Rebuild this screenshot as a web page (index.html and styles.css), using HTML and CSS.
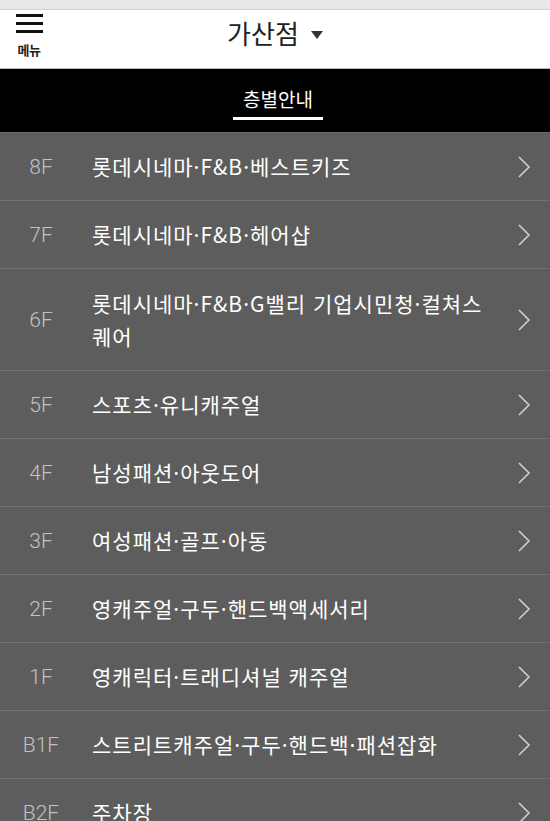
FILE: index.html
```html
<!DOCTYPE html>
<html lang="ko">
<head>
<meta charset="utf-8">
<link rel="stylesheet" href="styles.css">
</head>
<body>
<div class="topstrip"></div>
<header class="header">
  <div class="menu">
    <span class="bar"></span><span class="bar"></span><span class="bar"></span>
    <span class="menu-label">메뉴</span>
  </div>
  <div class="title">가산점 <span class="caret"></span></div>
</header>
<nav class="tabs">
  <span class="tab">층별안내</span>
</nav>
<ul class="floors">
  <li class="row"><span class="fl">8F</span><span class="txt">롯데시네마·F&amp;B·베스트키즈</span><span class="chev"><svg width="14" height="24" viewBox="0 0 14 24"><path d="M2 2 L12 12 L2 22" fill="none" stroke="#cfcfcf" stroke-width="1.6"/></svg></span></li>
  <li class="row"><span class="fl">7F</span><span class="txt">롯데시네마·F&amp;B·헤어샵</span><span class="chev"><svg width="14" height="24" viewBox="0 0 14 24"><path d="M2 2 L12 12 L2 22" fill="none" stroke="#cfcfcf" stroke-width="1.6"/></svg></span></li>
  <li class="row tall"><span class="fl">6F</span><span class="txt">롯데시네마·F&amp;B·G밸리 기업시민청·컬쳐스퀘어</span><span class="chev"><svg width="14" height="24" viewBox="0 0 14 24"><path d="M2 2 L12 12 L2 22" fill="none" stroke="#cfcfcf" stroke-width="1.6"/></svg></span></li>
  <li class="row"><span class="fl">5F</span><span class="txt">스포츠·유니캐주얼</span><span class="chev"><svg width="14" height="24" viewBox="0 0 14 24"><path d="M2 2 L12 12 L2 22" fill="none" stroke="#cfcfcf" stroke-width="1.6"/></svg></span></li>
  <li class="row"><span class="fl">4F</span><span class="txt">남성패션·아웃도어</span><span class="chev"><svg width="14" height="24" viewBox="0 0 14 24"><path d="M2 2 L12 12 L2 22" fill="none" stroke="#cfcfcf" stroke-width="1.6"/></svg></span></li>
  <li class="row"><span class="fl">3F</span><span class="txt">여성패션·골프·아동</span><span class="chev"><svg width="14" height="24" viewBox="0 0 14 24"><path d="M2 2 L12 12 L2 22" fill="none" stroke="#cfcfcf" stroke-width="1.6"/></svg></span></li>
  <li class="row"><span class="fl">2F</span><span class="txt">영캐주얼·구두·핸드백액세서리</span><span class="chev"><svg width="14" height="24" viewBox="0 0 14 24"><path d="M2 2 L12 12 L2 22" fill="none" stroke="#cfcfcf" stroke-width="1.6"/></svg></span></li>
  <li class="row"><span class="fl">1F</span><span class="txt">영캐릭터·트래디셔널 캐주얼</span><span class="chev"><svg width="14" height="24" viewBox="0 0 14 24"><path d="M2 2 L12 12 L2 22" fill="none" stroke="#cfcfcf" stroke-width="1.6"/></svg></span></li>
  <li class="row"><span class="fl">B1F</span><span class="txt">스트리트캐주얼·구두·핸드백·패션잡화</span><span class="chev"><svg width="14" height="24" viewBox="0 0 14 24"><path d="M2 2 L12 12 L2 22" fill="none" stroke="#cfcfcf" stroke-width="1.6"/></svg></span></li>
  <li class="row"><span class="fl">B2F</span><span class="txt">주차장</span><span class="chev"><svg width="14" height="24" viewBox="0 0 14 24"><path d="M2 2 L12 12 L2 22" fill="none" stroke="#cfcfcf" stroke-width="1.6"/></svg></span></li>
</ul>
</body>
</html>
```
FILE: styles.css
```css
* { box-sizing: border-box; }
html, body { margin: 0; padding: 0; }
body {
  width: 550px;
  background: #5d5d5d;
  font-family: "Noto Sans CJK KR", "Noto Sans", sans-serif;
  overflow: hidden;
}
.topstrip {
  height: 10px;
  background: #e9e9e9;
  border-bottom: 1px solid #d0d0d0;
}
.header {
  position: relative;
  height: 59px;
  background: #fff;
  border-bottom: 1px solid #b5b5b5;
  display: flex;
  align-items: center;
  justify-content: center;
}
.menu {
  position: absolute;
  left: 15px;
  top: 4px;
  width: 28px;
  display: flex;
  flex-direction: column;
  align-items: center;
}
.bar {
  display: block;
  width: 27px;
  height: 3px;
  background: #111;
  margin-bottom: 5px;
}
.menu-label {
  font-size: 13px;
  font-weight: 700;
  line-height: 15px;
  color: #222;
  margin-top: 4px;
  letter-spacing: -0.5px;
}
.title {
  font-size: 26px;
  color: #222;
  line-height: 30px;
  display: flex;
  align-items: center;
  margin-top: -12px;
}
.caret {
  display: inline-block;
  width: 0;
  height: 0;
  border-left: 6px solid transparent;
  border-right: 6px solid transparent;
  border-top: 8px solid #333;
  margin-left: 12px;
  margin-top: 3px;
}
.tabs {
  height: 63px;
  background: #000;
  display: flex;
  justify-content: center;
  align-items: flex-start;
}
.tab {
  color: #fff;
  font-size: 19px;
  line-height: 24px;
  padding: 18px 10px 6px;
  border-bottom: 3px solid #fff;
  margin-left: 6px;
}
.floors {
  list-style: none;
  margin: 0;
  padding: 0;
  border-top: 1px solid #6a6a6a;
}
.row {
  display: flex;
  align-items: center;
  min-height: 68px;
  border-bottom: 1px solid #717171;
  color: #fff;
}
.row.tall { min-height: 102px; }
.fl {
  width: 82px;
  text-align: center;
  font-family: Roboto, "Noto Sans", sans-serif;
  font-weight: 300;
  font-size: 21px;
  color: #c2c2c2;
  flex: none;
}
.txt {
  flex: 1 1 0;
  min-width: 0;
  max-width: 414px;
  font-size: 21px;
  line-height: 33px;
  letter-spacing: 1px;
  padding-left: 10px;
  padding-right: 0;
  word-break: break-all;
  color: #fff;
}
.chev {
  flex: none;
  width: 36px;
  margin-left: auto;
  margin-right: 8px;
  display: flex;
  justify-content: center;
}
.chev svg { display: block; }
```
